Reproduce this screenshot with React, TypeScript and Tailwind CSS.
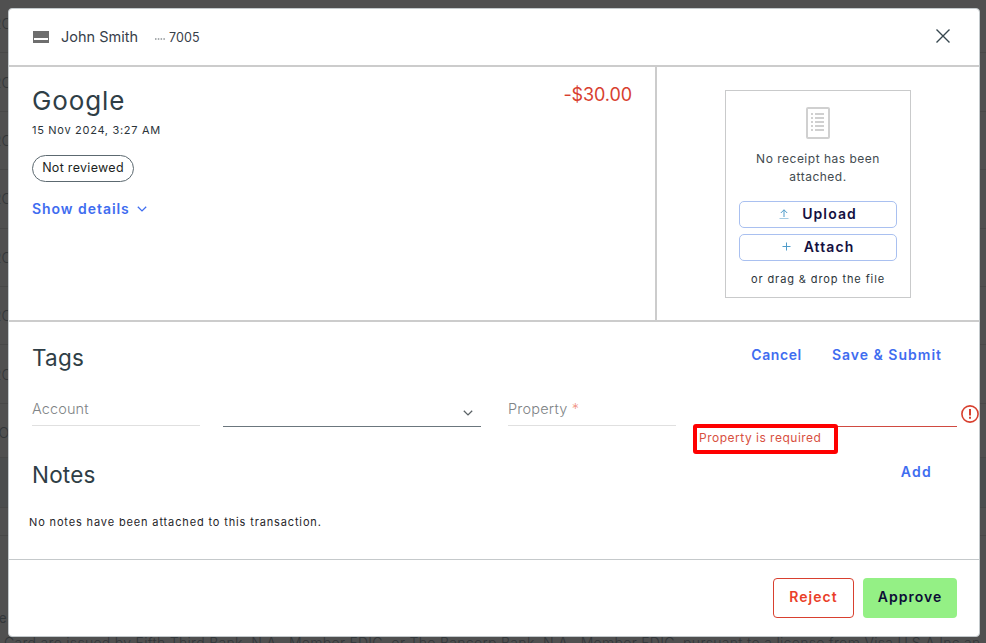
import React from 'react'

interface LinkButtonProps {
  children: React.ReactNode
  className?: string
}

// Text-only action, used for Cancel / Save & Submit / Add
function LinkButton({ children, className = '' }: LinkButtonProps) {
  return (
    <button className={`flex items-center text-sm leading-5 font-semibold text-[#3f6df0] whitespace-nowrap ${className}`}>
      {children}
    </button>
  )
}

function CardIcon() {
  return (
    <svg width="16" height="12" viewBox="0 0 16 12">
      <rect width="16" height="12" fill="#6e6e6e" />
      <rect x="1" y="7" width="14" height="2" fill="#fff" />
    </svg>
  )
}

function CloseIcon() {
  return (
    <svg width="14" height="14" viewBox="0 0 14 14" fill="none" stroke="#37474f" strokeWidth="1.4">
      <path d="M0.5 0.5 13.5 13.5M13.5 0.5 0.5 13.5" />
    </svg>
  )
}

function ReceiptIcon() {
  return (
    <svg width="24" height="32" viewBox="0 0 24 32" fill="none" stroke="#d0d0d0">
      <rect x="1" y="1" width="22" height="30" rx="1" strokeWidth="2" />
      <path d="M5 7h2M5 11h2M5 15h2M5 19h2M5 23h2M9 7h9M9 11h9M9 15h9M9 19h9M9 23h9" strokeWidth="2" />
    </svg>
  )
}

function Chevron({ color, className = '' }: { color: string; className?: string }) {
  return (
    <svg className={className} width="10" height="6" viewBox="0 0 10 6" fill="none" stroke={color} strokeWidth="1.3">
      <path d="M0.8 0.7 5 4.9 9.2 0.7" />
    </svg>
  )
}

function UploadIcon() {
  return (
    <svg width="10" height="10" viewBox="0 0 10 10" fill="none" stroke="#4f9bc9">
      <path d="M5 8V0.8M1.8 4 5 0.8 8.2 4" />
      <path d="M0.5 9.5h9" stroke="#a5cbe2" />
    </svg>
  )
}

function PlusIcon() {
  return (
    <svg width="9" height="9" viewBox="0 0 9 9" stroke="#4f9bc9">
      <path d="M4.5 0.5v8M0.5 4.5h8" />
    </svg>
  )
}

function AlertIcon() {
  return (
    <svg width="18" height="18" viewBox="0 0 18 18" fill="none" stroke="#d8402f">
      <circle cx="9" cy="9" r="8.1" strokeWidth="1.6" />
      <path d="M9 4v6.4M9 11.8v2" strokeWidth="2" />
    </svg>
  )
}

const rows = ['2C', '2C', '2C', '2C', '2C', '2C', '2C', 'O']

// Dimmed transactions table visible around the modal
function Backdrop() {
  return (
    <div className="absolute inset-0 overflow-hidden bg-[#505050] text-[#323639]">
      <div className="h-[462px] overflow-hidden -mt-[5px]">
        {rows.map((row, i) => (
          <div key={i} className="flex h-[58.4px] items-center border-b border-[#484848] pt-px">
            <span className="-ml-[7px] w-[16px] text-right text-sm font-light">{row}</span>
          </div>
        ))}
      </div>
      <div className="h-[51px] border-y border-[#484848] bg-[#4b4d4e]" />
      <div className="h-[28px] border-b border-[#484848]" />
      <div className="mt-[72px] h-5 text-[13px] leading-5 -ml-[1px]">e</div>
      <p className="mt-[5px] ml-[4px] whitespace-nowrap text-sm leading-5 font-light tracking-[0.3px]">
        Card are issued by Fifth Third Bank, N.A., Member FDIC, or The Bancorp Bank, N.A., Member FDIC, pursuant to a license from Visa U.S.A Inc an
      </p>
    </div>
  )
}

function Header() {
  return (
    <header className="flex h-[58px] items-center border-b-2 border-[#cccccc] pl-6 pr-[29px]">
      <CardIcon />
      <span className="ml-3 text-[14.5px] leading-5 text-[#37404a]">John Smith</span>
      <span className="ml-[16px] mt-px flex items-center text-[12.5px] leading-5 tracking-[0.1px] text-[#37404a]">
        <svg width="12" height="2" viewBox="0 0 12 2" className="mr-[3px] mt-[2px]">
          <path d="M1 1h10" stroke="#555d62" strokeDasharray="1.5 1.3" />
        </svg>
        7005
      </span>
      <button className="ml-auto -mt-[3px]">
        <CloseIcon />
      </button>
    </header>
  )
}

function Summary() {
  return (
    <div className="flex w-[648px] flex-col items-start border-r-2 border-[#cccccc] pl-[23px] pr-[23px] pt-[16px]">
      <div className="flex w-full justify-between">
        <h1 className="mt-[2px] text-[26px] leading-8 tracking-[0.9px] text-[#2f3e46]">Google</h1>
        <span className="text-lg leading-6 tracking-[-0.1px] text-[#d8402f]">-$30.00</span>
      </div>
      <p className="mt-[5px] text-[11px] leading-4 tracking-[0.7px] text-[#2b343a]">15 Nov 2024, 3:27 AM</p>
      <span className="mt-[17px] flex h-[27px] w-[102px] items-center justify-center rounded-full border border-[#5c6970] pb-[1px] text-[12.5px] tracking-[0.3px] text-[#1c1f22]">
        Not reviewed
      </span>
      <LinkButton className="mt-[17px] tracking-[0.95px]">
        Show details
        <Chevron color="#3f6df0" className="ml-[7px]" />
      </LinkButton>
    </div>
  )
}

function ReceiptDrop() {
  const button =
    'flex h-[27px] w-[158px] items-center justify-center rounded-[5px] border border-[#a9c0f0] pb-[2px] text-sm font-semibold text-[#14103f]'

  return (
    <div className="flex flex-1 justify-center pt-[23px]">
      <div className="flex h-[208px] w-[186px] flex-col items-center border border-[#c9cacb] pt-4">
        <ReceiptIcon />
        <p className="mt-[11px] w-[150px] text-center text-xs leading-[18px] tracking-[0.5px] text-[#434b50]">
          No receipt has been attached.
        </p>
        <button className={`${button} mt-[15px] tracking-[1.1px]`}>
          <span className="mr-[13px]"><UploadIcon /></span>
          Upload
        </button>
        <button className={`${button} mt-[6px] tracking-[1.1px]`}>
          <span className="mr-[13px]"><PlusIcon /></span>
          Attach
        </button>
        <p className="mt-[10px] text-[11px] leading-4 tracking-[0.9px] text-[#2b343a]">or drag &amp; drop the file</p>
      </div>
    </div>
  )
}

function Tags() {
  return (
    <section className="relative h-[121px] border-t-2 border-[#cccccc]">
      <div className="flex items-start pl-[23px] pr-[37px] pt-[22px]">
        <h2 className="text-[22.5px] leading-7 tracking-[0.2px] text-[#2f3e46]">Tags</h2>
        <LinkButton className="ml-auto mt-[1px] tracking-[0.6px]">Cancel</LinkButton>
        <LinkButton className="ml-[30px] mt-[1px] tracking-[1px]">Save &amp; Submit</LinkButton>
      </div>
      <div className="mt-[27px] flex items-start pl-[23px]">
        <label className="h-[27px] w-[168px] border-b border-[#e0e0e0] text-[14.5px] leading-5 font-light tracking-[0.1px] text-[#808486]">
          Account
        </label>
        <div className="ml-[23px] flex h-[28px] w-[258px] items-center justify-end border-b border-[#6b767d] pr-[8px]">
          <Chevron color="#5b6266" />
        </div>
        <label className="ml-[27px] h-[27px] w-[168px] border-b border-[#e0e0e0] text-[14.5px] leading-5 font-light tracking-[0.2px] text-[#808486]">
          Property <span className="text-[#f0907f]">*</span>
        </label>
        <div className="ml-[23px] h-[28px] w-[258px] border-b border-[#d04a41]" />
        <span className="ml-[4px] mt-[6px] shrink-0">
          <AlertIcon />
        </span>
      </div>
      {/* validation message, drawn over the field's underline */}
      <div className="absolute left-[684px] top-[102px] h-[30px] w-[145px] rounded-[3px] border-4 border-[#fe0000] pl-[2px] pt-[1px] text-xs leading-[18px] tracking-[0.5px] text-[#d8503f] whitespace-nowrap">
        Property is required
      </div>
    </section>
  )
}

function Notes() {
  return (
    <section className="h-[118px] pt-[20px]">
      <div className="flex items-start justify-between pl-[23px] pr-[47px]">
        <h2 className="text-[22.5px] leading-7 tracking-[0.2px] text-[#2f3e46]">Notes</h2>
        <LinkButton className="mt-[1px] tracking-[1.3px]">Add</LinkButton>
      </div>
      <p className="ml-[20px] mt-[25px] text-[11px] leading-4 tracking-[0.86px] text-[#1f2529]">
        No notes have been attached to this transaction.
      </p>
    </section>
  )
}

function Footer() {
  return (
    <footer className="flex flex-1 justify-end gap-[9px] border-t border-[#c5c9cb] pr-[22px] pt-[18px]">
      <button className="h-10 w-[81px] rounded-[4px] border border-[#d8402f] pb-[2px] text-sm font-semibold tracking-[1px] text-[#ea3f29]">
        Reject
      </button>
      <button className="h-10 w-[94px] rounded-[4px] bg-[#94f085] pb-[2px] text-sm font-semibold tracking-[1px] text-[#0c0d36]">
        Approve
      </button>
    </footer>
  )
}

export default function App() {
  return (
    <div className="relative h-[643px] w-[986px] overflow-hidden font-['Inter',sans-serif]">
      <Backdrop />
      <div className="absolute left-[8px] top-[8px] flex h-[629px] w-[972px] flex-col rounded-[4px] border border-[#c3c9cc] bg-white">
        <Header />
        <div className="flex h-[253px]">
          <Summary />
          <ReceiptDrop />
        </div>
        <Tags />
        <Notes />
        <Footer />
      </div>
    </div>
  )
}
